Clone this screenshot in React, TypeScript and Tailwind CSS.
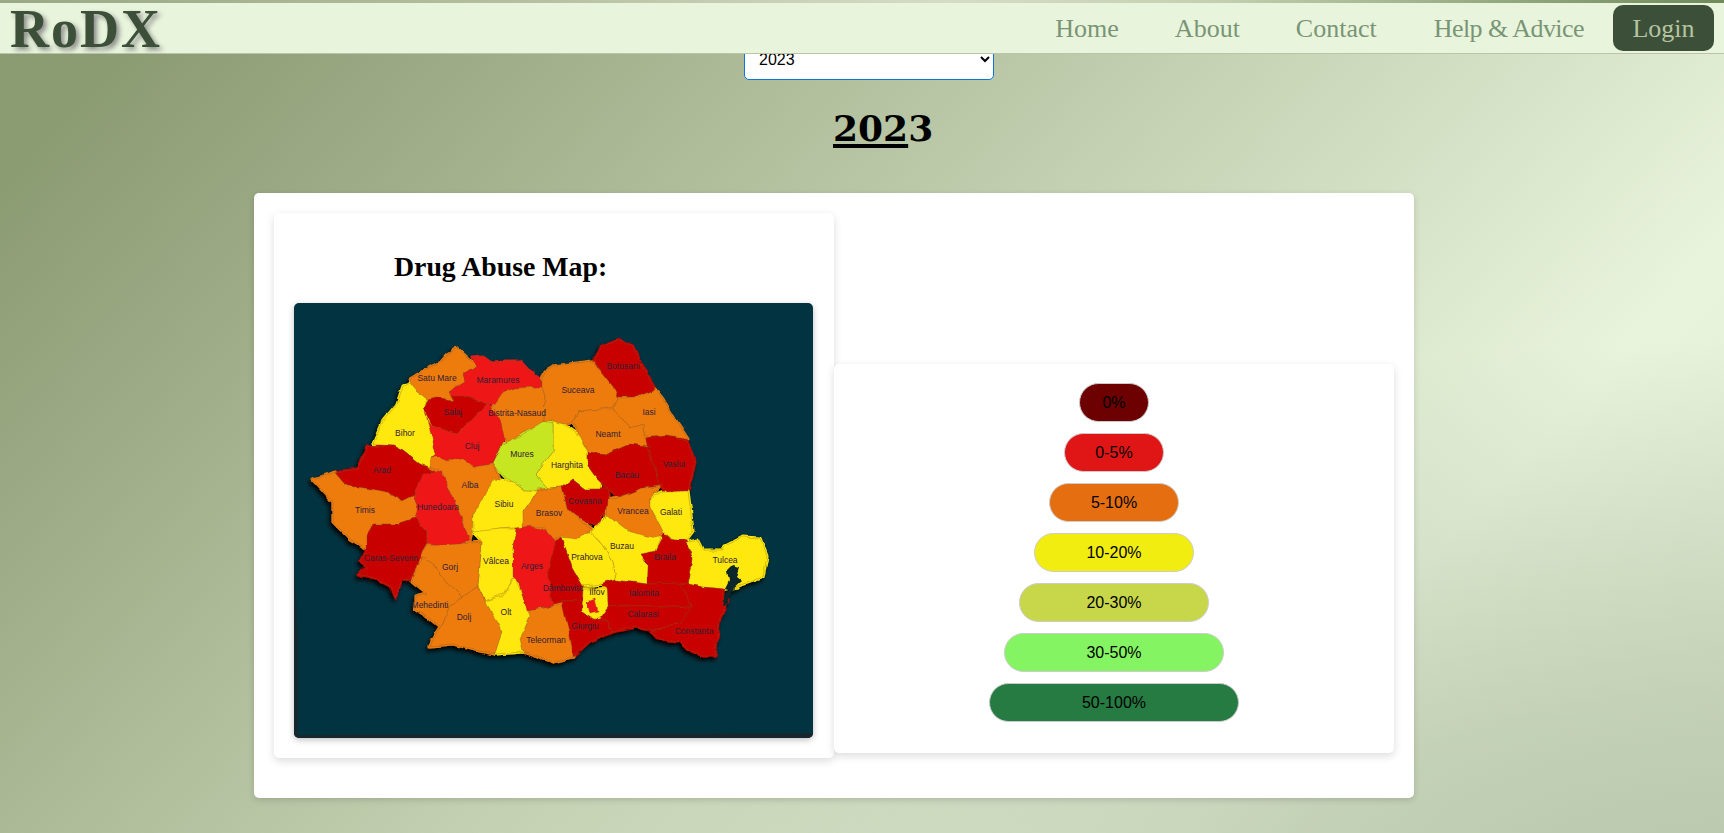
const ORANGE = "#ee7b10";
const DARK = "#c80202";
const RED = "#ee1616";
const YELLOW = "#ffe80a";
const LIME = "#c6e620";

// county outlines, in page pixels (the svg viewBox starts at the map's corner)
const counties: { c: string; p: string }[] = [
  { c: ORANGE, p: "410,380 423,372 440,363 447,355 457,349 467,358 477,368 463,375 465,382 457,387 448,393 453,402 437,398 427,400 418,393 411,385" },
  { c: RED, p: "448,393 457,387 465,382 463,375 477,368 473,358 482,357 490,363 507,362 520,362 530,373 542,382 542,388 517,389 503,393 495,405 487,405 463,397 452,397" },
  { c: DARK, p: "424,410 428,400 437,398 453,402 452,397 463,397 487,405 473,420 467,425 457,435 447,432 433,427 425,417" },
  { c: ORANGE, p: "503,393 517,389 542,388 545,398 544,423 522,433 507,445 502,433 500,420 490,412" },
  { c: ORANGE, p: "542,382 545,372 553,367 593,362 615,390 619,400 613,408 603,410 578,412 573,422 563,425 553,422 544,423 545,398 542,388" },
  { c: DARK, p: "594,362 602,347 620,341 633,347 645,372 655,390 638,398 619,398 615,390" },
  { c: ORANGE, p: "619,399 638,398 655,390 663,400 675,420 688,440 667,437 647,438 643,430 645,425 630,429 613,410" },
  { c: ORANGE, p: "573,422 578,412 603,410 613,410 630,429 645,425 643,430 647,447 630,445 607,455 588,453 580,437" },
  { c: YELLOW, p: "553,422 563,425 580,437 588,453 588,467 602,480 600,490 585,490 572,480 562,488 548,489 535,475 553,453" },
  { c: LIME, p: "493,465 503,445 520,437 542,423 553,425 553,453 535,475 548,489 537,490 535,493 523,490 507,480" },
  { c: DARK, p: "588,453 607,455 630,445 647,447 660,487 643,489 620,498 608,490 595,477 588,467" },
  { c: DARK, p: "647,440 667,437 687,442 695,463 688,492 667,493 663,488 660,487" },
  { c: DARK, p: "562,488 572,480 585,490 600,490 608,490 610,503 597,527 575,517 567,510" },
  { c: ORANGE, p: "608,500 620,498 643,489 660,488 650,498 650,507 663,532 655,542 640,537 617,527 607,518" },
  { c: YELLOW, p: "667,493 688,492 692,523 693,532 687,540 670,540 663,532 650,507 650,498 663,493" },
  { c: YELLOW, p: "686,543 697,540 703,552 723,552 725,547 743,538 760,539 767,557 763,578 743,585 737,588 725,590 703,588 688,585 693,560" },
  { c: DARK, p: "640,555 655,552 663,537 685,542 693,560 688,585 647,585 648,567" },
  { c: YELLOW, p: "592,533 608,517 627,532 660,540 655,552 640,555 648,567 647,585 615,581 612,563 603,547" },
  { c: YELLOW, p: "561,538 592,535 603,547 612,563 615,581 603,585 583,587 572,568" },
  { c: DARK, p: "555,542 561,538 572,568 583,587 583,602 562,602 553,605 547,590 548,570" },
  { c: DARK, p: "562,602 583,602 582,613 593,620 608,622 612,633 590,642 573,658 570,637 565,623" },
  { c: DARK, p: "603,585 615,581 647,585 680,584 692,607 667,607 608,607 607,590" },
  { c: DARK, p: "608,607 667,607 692,608 680,623 653,632 637,628 612,633 608,622 600,618" },
  { c: DARK, p: "680,584 688,585 703,588 723,590 723,607 729,600 720,617 715,657 703,657 687,650 680,642 660,640 650,633 653,632 680,623 692,608" },
  { c: YELLOW, p: "583,590 607,590 608,607 600,618 593,620 582,613" },
  { c: RED, p: "587,603 595,600 598,613 590,615" },
  { c: ORANGE, p: "527,612 552,607 540,610 562,605 570,637 573,658 553,663 523,653 520,640 530,617" },
  { c: YELLOW, p: "403,387 410,383 418,393 427,400 424,410 433,428 432,438 436,455 429,468 420,465 403,452 393,447 373,445 383,422 397,405" },
  { c: RED, p: "424,410 425,417 433,427 447,432 457,435 467,425 473,420 487,405 492,412 500,420 504,437 493,465 475,468 463,460 447,462 437,458 430,458 436,455 432,438" },
  { c: DARK, p: "335,473 358,470 367,448 393,447 403,452 420,465 432,472 417,490 413,497 403,502 387,493 370,490 347,487" },
  { c: ORANGE, p: "312,480 325,477 335,473 347,487 370,490 387,493 403,502 413,497 418,510 415,519 407,522 397,525 372,525 367,538 368,550 350,540 333,523 333,503" },
  { c: DARK, p: "372,525 397,525 415,519 427,532 427,545 420,557 418,567 410,580 402,582 395,598 390,587 372,578 358,575 367,568 360,563 367,550 367,538" },
  { c: RED, p: "413,500 423,475 442,473 455,502 463,523 470,542 460,545 440,547 427,545 427,532 415,519 418,507" },
  { c: ORANGE, p: "430,458 437,458 447,462 463,460 475,468 493,465 501,483 482,503 473,515 472,533 470,542 463,523 455,502 442,473 429,468" },
  { c: YELLOW, p: "473,515 482,503 493,480 513,483 525,492 537,493 523,513 525,528 500,530 473,535" },
  { c: YELLOW, p: "472,533 500,530 516,530 513,550 515,578 503,595 485,602 478,587 482,543" },
  { c: ORANGE, p: "420,557 427,547 460,545 482,543 478,587 463,598 437,573 432,563" },
  { c: ORANGE, p: "423,558 432,563 437,573 463,598 450,607 447,617 440,628 428,618 415,610 415,598 427,595 412,583 418,567" },
  { c: ORANGE, p: "450,607 463,598 477,588 485,602 500,627 502,633 495,655 480,652 453,645 430,647 438,632 447,617" },
  { c: YELLOW, p: "485,602 503,597 515,578 530,617 520,640 523,653 495,655 502,633 500,627" },
  { c: RED, p: "516,530 530,527 550,533 555,545 548,570 552,607 527,612 520,583 513,578 513,550" },
  { c: ORANGE, p: "523,513 537,493 548,489 562,488 567,510 575,517 592,530 578,540 560,538 553,540 543,528 523,527" },
];

const labels: [string, number, number][] = [
  ["Satu Mare", 437, 379], ["Maramures", 498, 381], ["Salaj", 453, 413], ["Bistrita-Nasaud", 517, 414],
  ["Bihor", 405, 434], ["Cluj", 472, 447], ["Mures", 522, 455], ["Arad", 382, 471], ["Alba", 470, 486],
  ["Sibiu", 504, 505], ["Timis", 365, 511], ["Hunedoara", 438, 508], ["Suceava", 578, 391], ["Botosani", 623, 367],
  ["Iasi", 649, 413], ["Neamt", 608, 435], ["Harghita", 567, 466], ["Bacau", 627, 476], ["Vaslui", 674, 465],
  ["Covasna", 585, 502], ["Brasov", 549, 514], ["Vrancea", 633, 512], ["Galati", 671, 513], ["Buzau", 622, 547],
  ["Prahova", 587, 558], ["Tulcea", 725, 561], ["Braila", 665, 558], ["Ilfov", 597, 593], ["Dâmbovita", 563, 589],
  ["Ialomita", 644, 594], ["Calarasi", 643, 615], ["Giurgiu", 585, 627], ["Constanta", 694, 632], ["Teleorman", 546, 641],
  ["Arges", 532, 567], ["Vâlcea", 496, 562], ["Gorj", 450, 568], ["Caras-Severin", 391, 559], ["Mehedinti", 430, 606],
  ["Dolj", 464, 618], ["Olt", 506, 613],
];

const RomaniaMap = () => (
  <svg viewBox="294 304 519 435" className="block w-full h-full">
    <defs>
      {/* wobble the straight polygon edges so the borders look hand drawn */}
      <filter id="soft" x="-10%" y="-10%" width="120%" height="120%">
        <feTurbulence type="fractalNoise" baseFrequency="0.09" numOctaves="2" seed="4" result="noise" />
        <feDisplacementMap in="SourceGraphic" in2="noise" scale="5" xChannelSelector="R" yChannelSelector="G" result="wobbly" />
        <feGaussianBlur in="wobbly" stdDeviation="0.35" result="smooth" />
        <feDropShadow in="smooth" dx="-2" dy="3" stdDeviation="2" floodColor="#000" floodOpacity="0.95" />
      </filter>
    </defs>
    <polygon points="294,560 298,640 298,736 813,734 813,739 294,739" fill="#16282d" />
    <g filter="url(#soft)">
      {/* first pass closes the gaps left between neighbouring counties */}
      {counties.map((county, i) => (
        <polygon key={i} points={county.p} fill={county.c} stroke={county.c} strokeWidth="3" strokeLinejoin="round" />
      ))}
      {counties.map((county, i) => (
        <polygon key={i} points={county.p} fill={county.c} stroke="#7a5a20" strokeOpacity="0.55" strokeWidth="0.6" strokeLinejoin="round" />
      ))}
      <polygon points="733,566 740,568 737,578 742,582 731,592 725,590 729,582 727,572" fill="#10262c" />
      <polygon points="726,593 733,591 727,606 723,607" fill="#10262c" />
    </g>
    {labels.map(([name, x, y]) => (
      <text key={name} x={x} y={y + 3} textAnchor="middle" fontSize="8.5" fill="#2e2036" fontFamily="'Liberation Sans', sans-serif">
        {name}
      </text>
    ))}
  </svg>
);

const legend = [
  { label: "0%", color: "bg-[#6d0000]", width: "w-[70px]" },
  { label: "0-5%", color: "bg-[#e01616]", width: "w-[100px]" },
  { label: "5-10%", color: "bg-[#e56f10]", width: "w-[130px]" },
  { label: "10-20%", color: "bg-[#f2ed10]", width: "w-[160px]" },
  { label: "20-30%", color: "bg-[#c8d64a]", width: "w-[190px]" },
  { label: "30-50%", color: "bg-[#84f462]", width: "w-[220px]" },
  { label: "50-100%", color: "bg-[#267b42]", width: "w-[250px]" },
];

const navLinks = [
  { label: "Home", style: "ml-0" },
  { label: "About", style: "ml-[56px]" },
  { label: "Contact", style: "ml-[56px]" },
  { label: "Help & Advice", style: "ml-[57px] tracking-[-0.55px]" },
];

export default function App() {
  return (
    <div className="h-[833px] overflow-hidden font-['Liberation_Sans',sans-serif] bg-[radial-gradient(1300px_560px_at_1724px_900px,#b8c7ab_0%,rgba(184,199,171,0.75)_35%,rgba(184,199,171,0)_100%),linear-gradient(133deg,#8b9b72_0%,#8b9b72_7%,#e9f4dc_78%,#dfe9d0_100%)]">
      <div className="h-[3px] bg-[linear-gradient(90deg,#9aa883_0%,#b5bf9f_30%,#d5dcc6_55%,#c5d0b0_70%,#6f8a5a_100%)]" />
      <nav className="relative z-10 h-[51px] flex items-center bg-[#e8f5dc] border-b border-[#b9c5a6] font-['Liberation_Serif',serif]">
        <span className="ml-[10px] mt-[2px] text-[54px] leading-[48px] font-bold tracking-[2px] text-[#3c4f38] [text-shadow:3px_3px_5px_#8a8a8a]">
          RoDX
        </span>
        <div className="ml-auto flex items-center">
          {navLinks.map((link) => (
            <a key={link.label} className={`pt-[1px] text-[26px] text-[#7a9476] ${link.style}`}>
              {link.label}
            </a>
          ))}
          <button className="ml-[29px] mr-[10px] w-[101px] h-[46px] rounded-[10px] bg-[#3c4f38] text-[#b5c4a0] text-[26px]">
            Login
          </button>
        </div>
      </nav>
      <div className="ml-[744px] -mt-[16px]">
        <select
          defaultValue="2023"
          className="block w-[250px] h-[42px] pl-[10px] pr-[4px] bg-white border border-[#0b76e0] rounded-[5px] text-[16px] text-black"
        >
          <option>2023</option>
        </select>
      </div>
      <h1 className="ml-[833px] mt-[23px] h-[50px] text-[36px] leading-[50px] font-bold text-black font-['DejaVu_Serif',serif]">
        <span className="underline decoration-[4px] underline-offset-[3px]">202</span>3
      </h1>
      <main className="ml-[254px] mt-[40px] w-[1160px] h-[605px] pt-[20px] px-[20px] bg-white rounded-[5px] shadow-[0_2px_6px_rgba(0,0,0,0.15)]">
        <div className="flex items-start">
          <section className="w-[560px] h-[545px] px-[20px] pt-[36px] bg-white rounded-[5px] shadow-[0_3px_8px_rgba(0,0,0,0.14)]">
            <h2 className="ml-[100px] h-[36px] text-[27.8px] leading-[36px] font-bold text-black font-['Liberation_Serif',serif]">
              Drug Abuse Map:
            </h2>
            <div className="mt-[18px] w-[519px] h-[435px] rounded-[5px] overflow-hidden bg-[#023340] shadow-[0_2px_6px_rgba(0,0,0,0.25)]">
              <RomaniaMap />
            </div>
          </section>
          <section className="w-[560px] h-[389px] mt-[151px] pt-[19px] flex flex-col items-center gap-[11px] bg-white rounded-[5px] shadow-[0_3px_8px_rgba(0,0,0,0.14)]">
            {legend.map((item) => (
              <div
                key={item.label}
                className={`h-[39px] flex items-center justify-center rounded-[20px] border border-[#cccccc] text-[16px] text-black ${item.color} ${item.width}`}
              >
                {item.label}
              </div>
            ))}
          </section>
        </div>
      </main>
    </div>
  );
}
